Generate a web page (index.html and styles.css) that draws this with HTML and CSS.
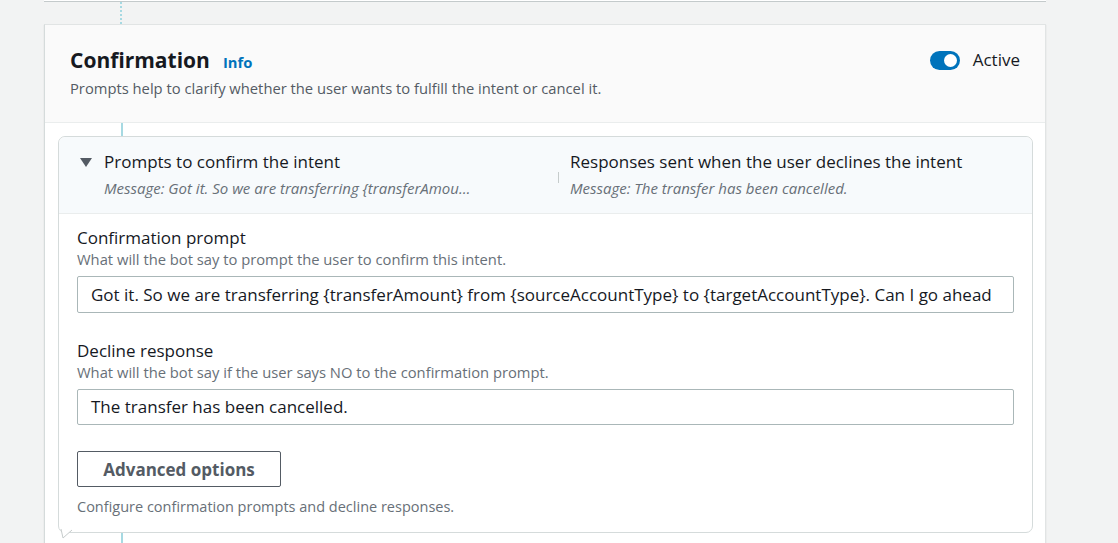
FILE: index.html
```html
<!DOCTYPE html>
<html>
<head>
<meta charset="utf-8">
<link rel="stylesheet" href="styles.css">
</head>
<body>
<div class="prev-card"></div>
<div class="connector dotted"></div>
<section class="card">
  <header class="card-header">
    <div class="header-text">
      <div class="title-row">
        <h2 class="title">Confirmation</h2>
        <a class="info">Info</a>
      </div>
      <p class="header-desc">Prompts help to clarify whether the user wants to fulfill the intent or cancel it.</p>
    </div>
    <div class="toggle-wrap">
      <span class="toggle"><span class="knob"></span></span>
      <span class="toggle-label">Active</span>
    </div>
  </header>
  <div class="connector solid short"></div>
  <div class="panel">
    <div class="panel-header">
      <div class="col col-left">
        <svg class="caret" width="12" height="9" viewBox="0 0 12 9"><polygon points="0,0 12,0 6,9" fill="#545b64"/></svg>
        <div class="col-text">
          <div class="col-title">Prompts to confirm the intent</div>
          <div class="col-msg">Message: Got it. So we are transferring {transferAmou…</div>
        </div>
      </div>
      <div class="col col-right">
        <span class="divider"></span>
        <div class="col-text">
          <div class="col-title">Responses sent when the user declines the intent</div>
          <div class="col-msg">Message: The transfer has been cancelled.</div>
        </div>
      </div>
    </div>
    <div class="panel-body">
      <div class="field">
        <div class="field-label">Confirmation prompt</div>
        <div class="field-desc">What will the bot say to prompt the user to confirm this intent.</div>
        <div class="text-input">Got it. So we are transferring {transferAmount} from {sourceAccountType} to {targetAccountType}. Can I go ahead</div>
      </div>
      <div class="field field-second">
        <div class="field-label">Decline response</div>
        <div class="field-desc">What will the bot say if the user says NO to the confirmation prompt.</div>
        <div class="text-input">The transfer has been cancelled.</div>
      </div>
      <button class="btn">Advanced options</button>
      <div class="footer-desc">Configure confirmation prompts and decline responses.</div>
    </div>
    <svg class="tail" width="14" height="12" viewBox="0 0 14 12"><polyline points="1,0 3,9 12,1" fill="#ffffff" stroke="#c6cccc" stroke-width="1"/></svg>
  </div>
  <div class="connector solid bottom"></div>
</section>
</body>
</html>
```

FILE: styles.css
```css
* { box-sizing: border-box; }
html, body {
  margin: 0;
  padding: 0;
  background: #f2f3f3;
  font-family: "Open Sans", "Noto Sans", Arial, sans-serif;
  color: #16191f;
  overflow: hidden;
}
.prev-card {
  margin-left: 44px;
  width: 1002px;
  height: 2px;
  background: #ffffff;
  border-bottom: 1px solid #c4cacb;
}
.connector {
  margin-left: 120px;
  width: 2px;
}
.connector.dotted {
  height: 22px;
  border-left: 2px dotted #a6d9e2;
}
.connector.solid {
  background: #a6d9e2;
}
.connector.short {
  margin-left: 76px;
  height: 13px;
}
.connector.bottom {
  margin-left: 76px;
  height: 20px;
}
.card {
  margin-left: 44px;
  width: 1002px;
  background: #ffffff;
  border: 1px solid #e1e4e4;
  border-left-color: #d5dbdb;
  border-bottom: none;
  box-shadow: 0 1px 1px rgba(0,28,36,0.15);
}
.card-header {
  display: flex;
  justify-content: space-between;
  align-items: flex-start;
  background: #fafafa;
  border-bottom: 1px solid #eaeded;
  padding: 21px 25px 24px 25px;
}
.title-row {
  display: flex;
  align-items: baseline;
  height: 28px;
}
.title {
  margin: 0;
  font-size: 21px;
  line-height: 28px;
  font-weight: 700;
  color: #16191f;
}
.info {
  margin-left: 13px;
  font-size: 14.75px;
  font-weight: 700;
  color: #0073bb;
}
.header-desc {
  margin: 4px 0 0 0;
  font-size: 14.75px;
  line-height: 20px;
  color: #545b64;
}
.toggle-wrap {
  display: flex;
  align-items: center;
  height: 28px;
}
.toggle {
  display: flex;
  align-items: center;
  justify-content: flex-end;
  width: 30px;
  height: 19px;
  border-radius: 10px;
  background: #0073bb;
  padding: 0 3px;
}
.knob {
  width: 13px;
  height: 13px;
  border-radius: 50%;
  background: #ffffff;
}
.toggle-label {
  margin-left: 13px;
  font-size: 17px;
  line-height: 22px;
  color: #16191f;
}
.panel {
  position: relative;
  margin: 0 12px 0 13px;
  border: 1px solid #d5dbdb;
  border-radius: 7px;
  background: #ffffff;
}
.panel-header {
  display: flex;
  background: #f7fafc;
  border-bottom: 1px solid #eaeded;
  border-radius: 7px 7px 0 0;
  padding: 14px 21px 15px 21px;
}
.col {
  display: flex;
}
.col-left {
  width: 478px;
  align-items: flex-start;
}
.caret {
  margin-top: 7px;
  margin-right: 12px;
  flex: none;
}
.col-right {
  align-items: center;
}
.divider {
  width: 1px;
  height: 11px;
  background: #c6cccc;
  margin-right: 11px;
  margin-top: 6px;
}
.col-title {
  font-size: 17px;
  line-height: 22px;
  color: #16191f;
}
.col-msg {
  margin-top: 5px;
  font-size: 15px;
  line-height: 20px;
  font-style: italic;
  color: #687078;
  white-space: nowrap;
}
.panel-body {
  padding: 13px 18px 15px 18px;
}
.field-second {
  margin-top: 27px;
}
.field-label {
  font-size: 17px;
  line-height: 22px;
  color: #16191f;
}
.field-desc {
  font-size: 14.75px;
  line-height: 20px;
  color: #687078;
}
.text-input {
  margin-top: 7px;
  height: 37px;
  border: 1px solid #aab7b8;
  border-radius: 2px;
  padding: 0 13px;
  font-size: 17px;
  line-height: 35px;
  color: #16191f;
  white-space: nowrap;
  overflow: hidden;
}
.field-second .text-input {
  height: 36px;
  line-height: 34px;
}
.btn {
  display: block;
  margin-top: 26px;
  width: 204px;
  height: 36px;
  background: #ffffff;
  border: 1px solid #545b64;
  border-radius: 2px;
  font-family: "Open Sans", "Noto Sans", Arial, sans-serif;
  font-size: 17px;
  font-weight: 700;
  color: #545b64;
  padding: 0;
}
.footer-desc {
  margin-top: 10px;
  font-size: 14.5px;
  line-height: 20px;
  color: #687078;
}
.tail {
  position: absolute;
  left: 1px;
  bottom: -9px;
}
```
